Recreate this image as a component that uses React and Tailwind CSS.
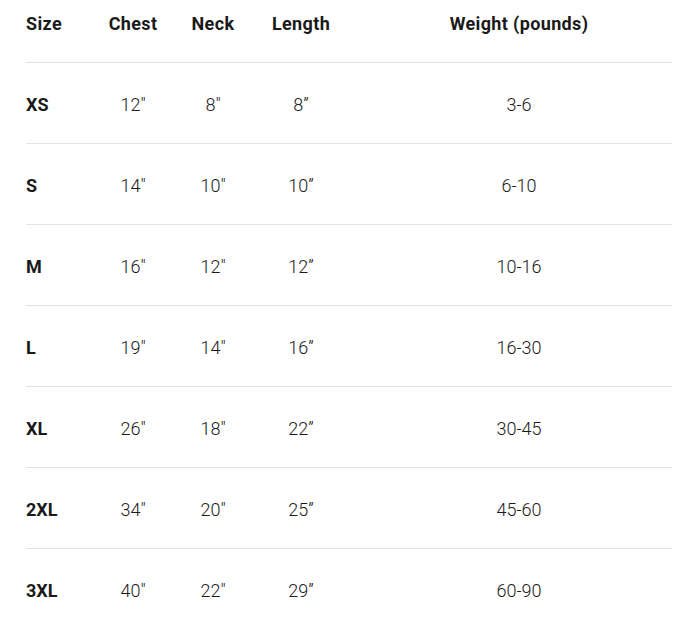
import React from "react";

const ROWS = [
  { size: "XS", chest: '12"', neck: '8"', length: "8”", weight: "3-6" },
  { size: "S", chest: '14"', neck: '10"', length: "10”", weight: "6-10" },
  { size: "M", chest: '16"', neck: '12"', length: "12”", weight: "10-16" },
  { size: "L", chest: '19"', neck: '14"', length: "16”", weight: "16-30" },
  { size: "XL", chest: '26"', neck: '18"', length: "22”", weight: "30-45" },
  { size: "2XL", chest: '34"', neck: '20"', length: "25”", weight: "45-60" },
  { size: "3XL", chest: '40"', neck: '22"', length: "29”", weight: "60-90" },
];

const GRID = "grid grid-cols-[54px_106px_54px_122px_1fr] items-center";

export default function App() {
  return (
    <div
      className="min-h-screen bg-white px-[26px] text-[18px] text-[#1a1a1a]"
      style={{ fontFamily: "Roboto, 'Noto Sans', sans-serif" }}
    >
      <div className="w-[646px]">
        <div className={`${GRID} h-[63px] border-b border-[#e3e3e3] pb-[16px] font-bold tracking-[0.02em]`}>
          <div>Size</div>
          <div className="text-center">Chest</div>
          <div className="text-center">Neck</div>
          <div className="text-center">Length</div>
          <div className="pl-[4px] text-center">Weight (pounds)</div>
        </div>
        {ROWS.map((row, i) => (
          <div
            key={row.size}
            className={`${GRID} h-[81px] pt-[2px] ${i < ROWS.length - 1 ? "border-b border-[#e3e3e3]" : ""}`}
          >
            <div className="font-bold">{row.size}</div>
            <div className="text-center font-light">{row.chest}</div>
            <div className="text-center font-light">{row.neck}</div>
            <div className="text-center font-light">{row.length}</div>
            <div className="pl-[4px] text-center font-light">{row.weight}</div>
          </div>
        ))}
      </div>
    </div>
  );
}
